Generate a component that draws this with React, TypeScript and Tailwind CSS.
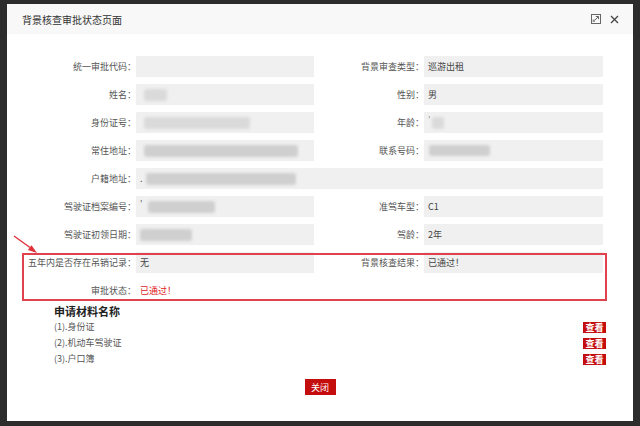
import type { ReactNode } from 'react';

const FONT = { fontFamily: '"Noto Sans CJK SC", "Noto Sans", sans-serif' };

// redacted value: a soft grey smear
function Blur({ w, h = 12, ml = 4, dark = false }: { w: number; h?: number; ml?: number; dark?: boolean }) {
    return (
        <span
            className={`inline-block rounded-[3px] blur-[1.5px] ${dark ? 'bg-[#cfcfcf]' : 'bg-[#dadada]'}`}
            style={{ width: w, height: h, marginLeft: ml }}
        />
    );
}

function Label({ children }: { children: ReactNode }) {
    return <div className="flex items-center justify-end text-[9px] text-[#555] whitespace-nowrap">{children}：</div>;
}

function Value({ children, span = false, plain = false }: { children?: ReactNode; span?: boolean; plain?: boolean }) {
    return (
        <div
            className={`flex items-center pl-[4px] text-[9px] text-[#444] overflow-hidden ${span ? 'col-span-3' : ''} ${
                plain ? '' : 'bg-[#f0f0f0]'
            }`}
        >
            {children}
        </div>
    );
}

function MaxIcon() {
    return (
        <svg width="10" height="10" viewBox="0 0 10 10" fill="none" stroke="#666" strokeWidth="1">
            <rect x="0.5" y="0.5" width="9" height="9" />
            <path d="M3 7 L7.5 2.5" />
            <path d="M4.8 2.5 H7.5 V5.2" />
            <rect x="1.5" y="5.5" width="2.5" height="2.5" fill="#999" stroke="none" />
        </svg>
    );
}

function CloseIcon() {
    return (
        <svg width="9" height="9" viewBox="0 0 9 9" stroke="#444" strokeWidth="1.3">
            <path d="M1 1 L8 8 M8 1 L1 8" />
        </svg>
    );
}

const materials = ['(1).身份证', '(2).机动车驾驶证', '(3).户口簿'];

export default function App() {
    return (
        <div className="relative w-[640px] h-[426px] bg-[#2c2c2c] pt-[4px] pl-[7px] pr-[7px] pb-[5px]" style={FONT}>
            <div className="h-full bg-white flex flex-col">
                {/* title bar */}
                <div className="h-[30px] bg-[#f8f8f8] flex items-center justify-between pl-[15px] pr-[14px] shrink-0">
                    <span className="text-[10px] text-[#333]">背景核查审批状态页面</span>
                    <div className="flex items-center gap-[9px]">
                        <MaxIcon />
                        <CloseIcon />
                    </div>
                </div>

                {/* form */}
                <div className="pt-[22px] pl-[15px]">
                    <div className="grid grid-cols-[114px_178px_110px_179px] auto-rows-[21px] gap-y-[7px]">
                        <Label>统一审批代码</Label>
                        <Value />
                        <Label>背景审查类型</Label>
                        <Value>巡游出租</Value>

                        <Label>姓名</Label>
                        <Value>
                            <Blur w={23} />
                        </Value>
                        <Label>性别</Label>
                        <Value>男</Value>

                        <Label>身份证号</Label>
                        <Value>
                            <Blur w={106} />
                        </Value>
                        <Label>年龄</Label>
                        <Value>
                            <span className="text-[#999] -mt-[6px]">'</span>
                            <Blur w={12} ml={1} />
                        </Value>

                        <Label>常住地址</Label>
                        <Value>
                            <Blur w={154} dark />
                        </Value>
                        <Label>联系号码</Label>
                        <Value>
                            <Blur w={61} ml={1} h={11} dark />
                        </Value>

                        <Label>户籍地址</Label>
                        <Value span>
                            <span className="text-[#555]">.</span>
                            <Blur w={150} ml={3} dark />
                        </Value>

                        <Label>驾驶证档案编号</Label>
                        <Value>
                            <span className="text-[#666] -mt-[6px]">'</span>
                            <Blur w={67} ml={5} dark />
                        </Value>
                        <Label>准驾车型</Label>
                        <Value>C1</Value>

                        <Label>驾驶证初领日期</Label>
                        <Value>
                            <Blur w={52} ml={0} dark />
                        </Value>
                        <Label>驾龄</Label>
                        <Value>2年</Value>

                        <Label>五年内是否存在吊销记录</Label>
                        <Value>无</Value>
                        <Label>背景核查结果</Label>
                        <Value>已通过！</Value>

                        <Label>审批状态</Label>
                        <Value plain>
                            <span className="text-[#e0201e]">已通过！</span>
                        </Value>
                    </div>
                </div>

                {/* materials */}
                <div className="pl-[47px] pr-[27px]">
                    <div className="mt-[2px] h-[16px] flex items-center text-[11px] font-bold text-[#222]">申请材料名称</div>
                    {materials.map((m) => (
                        <div key={m} className="h-[16px] flex items-center justify-between">
                            <span className="text-[9px] text-[#555]">{m}</span>
                            <span className="w-[23px] h-[11px] bg-[#c40d0d] text-white text-[9px] font-bold leading-none flex items-center justify-center">
                                查看
                            </span>
                        </div>
                    ))}
                </div>

                <div className="mt-[12px] flex justify-center">
                    <button
                        type="button"
                        className="w-[31px] h-[16px] bg-[#c40d0d] text-white text-[9px] leading-none flex items-center justify-center"
                    >
                        关闭
                    </button>
                </div>
            </div>

            {/* annotation: red frame + arrow */}
            <div className="absolute left-[22px] top-[253px] w-[585px] h-[48px] border-2 border-[#e0434d] pointer-events-none" />
            <svg className="absolute left-[10px] top-[230px] pointer-events-none" width="32" height="26" viewBox="0 0 32 26">
                <path d="M4 6 L20 17.5" stroke="#e0303a" strokeWidth="1.4" />
                <polygon points="27,23 17.9,20.1 21.5,15.3" fill="#e0303a" />
            </svg>
        </div>
    );
}
